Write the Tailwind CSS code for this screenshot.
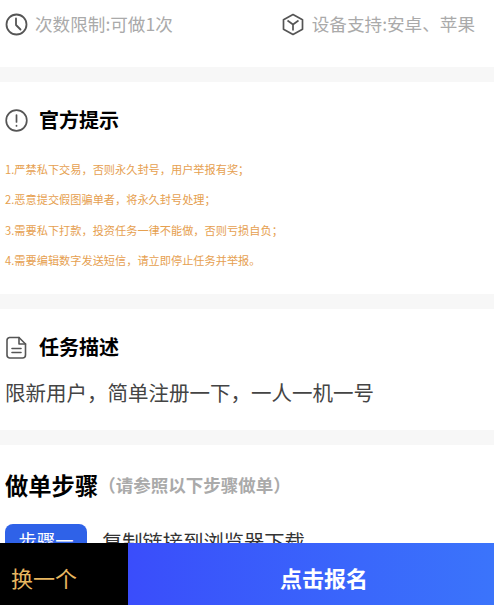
<!DOCTYPE html>
<html lang="zh"><head><meta charset="utf-8">
<script src="https://cdn.jsdelivr.net/npm/@tailwindcss/browser@4"></script>
</head>
<body class="bg-white">
<div class="relative h-[605px] w-[494px] overflow-hidden bg-white font-['Noto_Sans_CJK_SC','Noto_Sans',sans-serif]">
  <div class="flex h-[67px] items-start justify-between pl-[5px] pr-[19px] pt-[13px]">
    <div class="flex h-[22px] items-center gap-[7px]">
      <svg class="h-[23px] w-[23px]" viewBox="0 0 23 23" fill="none" stroke="#555" stroke-width="1.8" stroke-linecap="round" stroke-linejoin="round"><circle cx="11.5" cy="11.5" r="10"/><path d="M11 5.500v6.500l4.500 4.500"/></svg>
      <span class="text-[17.6px] leading-[22px] text-[#aaa]">次数限制:可做1次</span>
    </div>
    <div class="flex h-[22px] items-center gap-[8px]">
      <svg class="h-[23px] w-[22px]" viewBox="0 0 22 23" fill="none" stroke="#555" stroke-width="1.7" stroke-linejoin="round"><path d="M11 1.500l9.500 5.200v9.600L11 21.500l-9.500-5.200V6.700z"/><path d="M5.500 7.500L11 11.500l5.500-4M11 11.500v6"/></svg>
      <span class="text-[17.6px] leading-[22px] text-[#aaa]">设备支持:安卓、苹果</span>
    </div>
  </div>
  <div class="h-[15px] bg-[#f7f7f7]"></div>

  <section class="h-[212px] pl-[5px] pt-[25px]">
    <div class="flex h-[26px] items-center gap-[11px]">
      <svg class="h-[23px] w-[23px]" viewBox="0 0 23 23" fill="none" stroke="#555" stroke-width="1.7" stroke-linecap="round"><circle cx="11.5" cy="11.5" r="10.3"/><path d="M11.500 6v7M11.500 16.500v.4"/></svg>
      <h2 class="text-[20px] font-bold leading-[26px] text-black">官方提示</h2>
    </div>
    <ul class="mt-[29px] flex flex-col gap-[15.4px] text-[11.2px] leading-[15px] text-[#e6a04f]">
      <li>1.严禁私下交易，否则永久封号，用户举报有奖；</li>
      <li>2.恶意提交假图骗单者，将永久封号处理；</li>
      <li>3.需要私下打款，投资任务一律不能做，否则亏损自负；</li>
      <li>4.需要编辑数字发送短信，请立即停止任务并举报。</li>
    </ul>
  </section>
  <div class="h-[15px] bg-[#f7f7f7]"></div>

  <section class="h-[121px] pl-[5px] pt-[25px]">
    <div class="flex h-[26px] items-center gap-[12px]">
      <svg class="ml-[1px] h-[23px] w-[21px]" viewBox="0 0 21 23" fill="none" stroke="#555" stroke-width="1.6" stroke-linecap="round" stroke-linejoin="round"><path d="M3.500 1.500h9.500l6.500 6.500v11a3 3 0 0 1-3 3h-13a3 3 0 0 1-2.500-3v-14.500a3 3 0 0 1 2.500-3z"/><path d="M13 1.500v6.500h6.500M6 12.500h9M6 16.500h9"/></svg>
      <h2 class="text-[20px] font-bold leading-[26px] text-black">任务描述</h2>
    </div>
    <p class="mt-[18px] text-[20.5px] leading-[28px] text-[#444]">限新用户，简单注册一下，一人一机一号</p>
  </section>
  <div class="h-[15px] bg-[#f7f7f7]"></div>

  <section class="pl-[5px] pt-[24px]">
    <div class="flex h-[32px] items-center">
      <h2 class="text-[23.3px] font-bold leading-[32px] text-black">做单步骤</h2>
      <span class="text-[17.5px] font-bold leading-[32px] text-[#aaa]">（请参照以下步骤做单）</span>
    </div>
    <div class="mt-[23px] flex items-start gap-[15px]">
      <div class="flex h-[38px] w-[82px] items-center justify-center rounded-[8px] bg-[#2f62e8] pb-[5px] text-[18.3px] text-white">步骤一</div>
      <p class="pt-[3px] text-[20.3px] leading-[28px] text-[#333]">复制链接到浏览器下载</p>
    </div>
  </section>

  <div class="absolute bottom-0 left-0 flex h-[62px] w-full">
    <button class="flex w-[128px] items-center bg-black pl-[11px] pt-[6px] text-[22px] text-[#e8b860]">换一个</button>
    <button class="flex-1 bg-gradient-to-r from-[#3a4dfb] to-[#3b74fb] pl-[26px] pt-[6px] text-[22px] font-bold text-white">点击报名</button>
  </div>
</div>
</body></html>
